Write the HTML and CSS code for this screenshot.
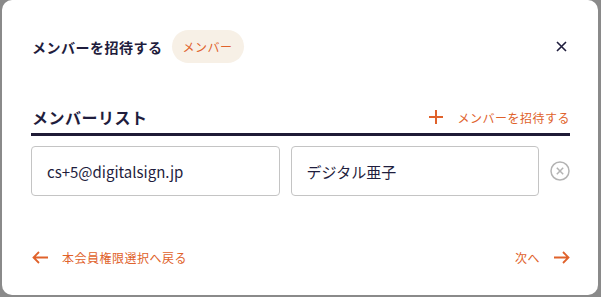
FILE: index.html
```html
<!DOCTYPE html>
<html lang="ja">
<head>
    <meta charset="UTF-8">
    <title>メンバーを招待する</title>
    <link rel="stylesheet" href="styles.css">
</head>
<body>
    <div class="dialog">
        <div class="dialog-header">
            <h2 class="dialog-title">メンバーを招待する</h2>
            <span class="badge">メンバー</span>
            <button class="close-btn" aria-label="閉じる">
                <svg width="11" height="11" viewBox="0 0 11 11"><path d="M1 1L10 10M10 1L1 10" stroke="#1f1d3d" stroke-width="1.6" fill="none"/></svg>
            </button>
        </div>

        <div class="list-header">
            <h3>メンバーリスト</h3>
            <a class="link add-link">
                <svg width="14" height="14" viewBox="0 0 14 14"><path d="M7 0V14M0 7H14" stroke="#e0622b" stroke-width="2" fill="none"/></svg>
                <span>メンバーを招待する</span>
            </a>
        </div>

        <div class="member-row">
            <input class="field" type="text" value="cs+5@digitalsign.jp">
            <input class="field" type="text" value="デジタル亜子">
            <button class="remove-btn" aria-label="削除">
                <svg width="20" height="20" viewBox="0 0 20 20">
                    <circle cx="10" cy="10" r="9" stroke="#b3b3b3" stroke-width="1.5" fill="none"/>
                    <path d="M6.8 6.8L13.2 13.2M13.2 6.8L6.8 13.2" stroke="#b3b3b3" stroke-width="1.5" fill="none"/>
                </svg>
            </button>
        </div>

        <div class="dialog-footer">
            <a class="link">
                <svg width="17" height="13" viewBox="0 0 17 13"><path d="M16 6.5H1.5M7 1L1.5 6.5L7 12" stroke="#e0622b" stroke-width="1.8" fill="none"/></svg>
                <span>本会員権限選択へ戻る</span>
            </a>
            <a class="link">
                <span>次へ</span>
                <svg width="17" height="13" viewBox="0 0 17 13"><path d="M1 6.5H15.5M10 1L15.5 6.5L10 12" stroke="#e0622b" stroke-width="1.8" fill="none"/></svg>
            </a>
        </div>
    </div>
</body>
</html>
```

FILE: styles.css
```css
* {
    margin: 0;
    padding: 0;
    box-sizing: border-box;
    font-family: "Noto Sans CJK JP", "Noto Sans", sans-serif;
    letter-spacing: 0.5px;
}

body {
    background-color: #8a8a8a;
    width: 601px;
    height: 297px;
    overflow: hidden;
}

.dialog {
    background-color: #ffffff;
    border-radius: 10px;
    margin-left: 2px;
    width: 596px;
    height: 295px;
    padding: 30px 28px 0 29px;
    color: #1f1d3d;
}

.dialog-header {
    display: flex;
    align-items: center;
    height: 33px;
    padding-left: 1px;
}

.dialog-title {
    font-size: 14px;
    font-weight: 700;
    margin-right: 9px;
}

.badge {
    background-color: #f7f0e6;
    color: #e0622b;
    font-size: 12px;
    border-radius: 17px;
    height: 33px;
    line-height: 33px;
    padding: 0 11px;
}

.close-btn {
    margin-left: auto;
    margin-right: 3px;
    border: none;
    background: none;
    display: flex;
}

.list-header {
    display: flex;
    align-items: center;
    justify-content: space-between;
    margin-top: 42px;
    padding: 0 0 4px 1px;
    border-bottom: 3px solid #1f1b36;
}

.list-header h3 {
    font-size: 16px;
    font-weight: 700;
    line-height: 24px;
}

.link {
    display: flex;
    align-items: center;
    gap: 13px;
    color: #e0622b;
    font-size: 12px;
    cursor: pointer;
}

.add-link {
    gap: 14px;
}

.member-row {
    display: flex;
    align-items: center;
    gap: 11px;
    margin-top: 10px;
}

.field {
    width: 250px;
    height: 50px;
    border: 1px solid #c4c4c4;
    border-radius: 4px;
    padding: 0 15px;
    font-size: 15px;
    letter-spacing: 0;
    color: #1f1d3d;
    outline: none;
}

.remove-btn {
    border: none;
    background: none;
    display: flex;
}

.dialog-footer {
    display: flex;
    justify-content: space-between;
    align-items: center;
    margin-top: 51px;
    padding-left: 1px;
    height: 20px;
}
```
